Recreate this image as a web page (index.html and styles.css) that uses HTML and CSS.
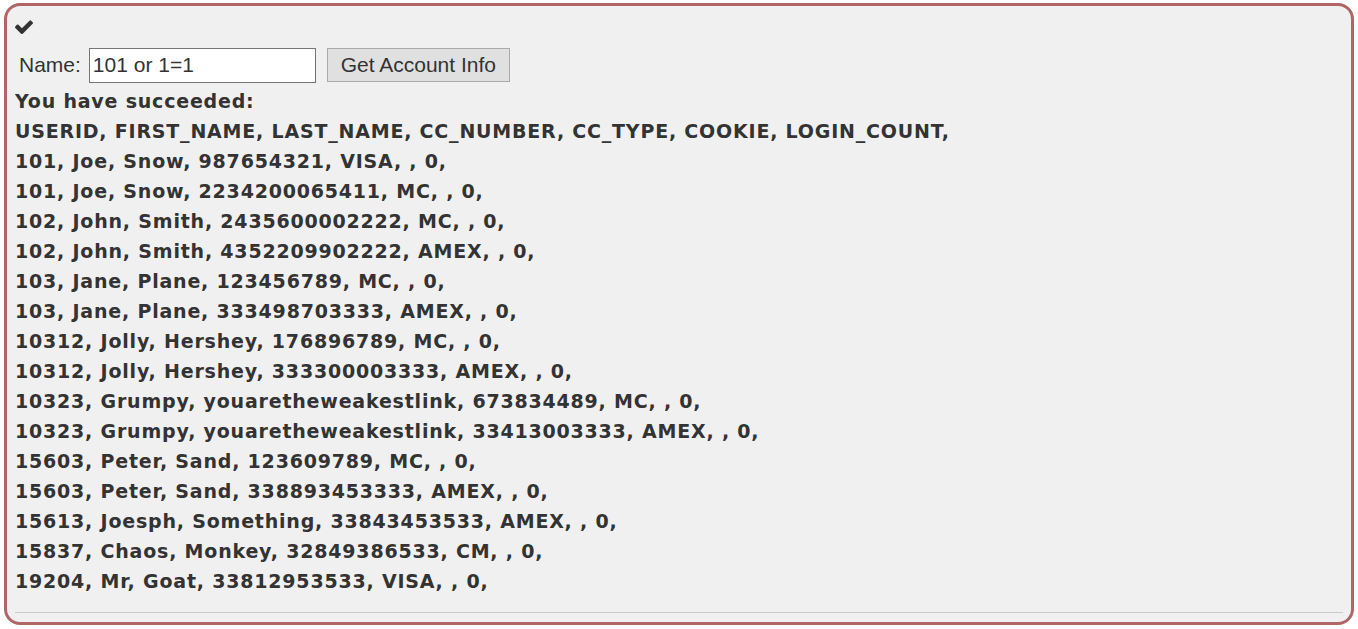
FILE: index.html
```html
<!DOCTYPE html>
<html>
<head>
<meta charset="utf-8">
<link rel="stylesheet" href="styles.css">
</head>
<body>
<div class="panel">
  <div class="check"><svg viewBox="120 320 1552 1180" width="18" height="14"><path fill="#333" d="M1671 566q0 40-28 68l-724 724-136 136q-28 28-68 28t-68-28l-136-136-362-362q-28-28-28-68t28-68l136-136q28-28 68-28t68 28l294 295 656-657q28-28 68-28t68 28l136 136q28 28 28 68z"/></svg></div>
  <form class="form">
    <label class="label">Name:</label>
    <input class="field" type="text" value="101 or 1=1">
    <button class="btn" type="button">Get Account Info</button>
  </form>
  <div class="output">
    <p>You have succeeded:</p>
    <p>USERID, FIRST_NAME, LAST_NAME, CC_NUMBER, CC_TYPE, COOKIE, LOGIN_COUNT, </p>
    <p>101, Joe, Snow, 987654321, VISA, , 0, </p>
    <p>101, Joe, Snow, 2234200065411, MC, , 0, </p>
    <p>102, John, Smith, 2435600002222, MC, , 0, </p>
    <p>102, John, Smith, 4352209902222, AMEX, , 0, </p>
    <p>103, Jane, Plane, 123456789, MC, , 0, </p>
    <p>103, Jane, Plane, 333498703333, AMEX, , 0, </p>
    <p>10312, Jolly, Hershey, 176896789, MC, , 0, </p>
    <p>10312, Jolly, Hershey, 333300003333, AMEX, , 0, </p>
    <p>10323, Grumpy, youaretheweakestlink, 673834489, MC, , 0, </p>
    <p>10323, Grumpy, youaretheweakestlink, 33413003333, AMEX, , 0, </p>
    <p>15603, Peter, Sand, 123609789, MC, , 0, </p>
    <p>15603, Peter, Sand, 338893453333, AMEX, , 0, </p>
    <p>15613, Joesph, Something, 33843453533, AMEX, , 0, </p>
    <p>15837, Chaos, Monkey, 32849386533, CM, , 0, </p>
    <p>19204, Mr, Goat, 33812953533, VISA, , 0, </p>
  </div>
  <hr class="rule">
</div>
</body>
</html>
```
FILE: styles.css
```css
html, body {
  margin: 0;
  padding: 0;
  background: #ffffff;
}
body {
  padding: 3px 4px 4px 4px;
  font-family: "Liberation Sans", Arial, sans-serif;
  color: #333333;
}
.panel {
  border: 3px solid #b06666;
  border-radius: 16px;
  background: #f0f0f0;
  padding: 9px 8px 9px 8px;
  height: 622px;
  box-sizing: border-box;
}
.check {
  height: 24px;
  padding-top: 5px;
  box-sizing: border-box;
}
.check svg {
  display: block;
}
.form {
  display: flex;
  align-items: center;
  margin: 8px 0 0 4px;
  height: 36px;
}
.label {
  font-size: 21px;
  margin-right: 8px;
}
.field {
  width: 227px;
  height: 35px;
  box-sizing: border-box;
  border: 1px solid #767676;
  background: #ffffff;
  font-family: "Liberation Sans", Arial, sans-serif;
  font-size: 21px;
  color: #333333;
  padding: 0 3px;
  margin: 0;
}
.btn {
  margin-left: 11px;
  height: 34px;
  width: 183px;
  box-sizing: border-box;
  padding: 0;
  border: 1px solid #aaaaaa;
  background: #e0e0e0;
  font-family: "Liberation Sans", Arial, sans-serif;
  font-size: 21px;
  color: #333333;
}
.output {
  margin-top: 3px;
}
.output p {
  margin: 0;
  font-family: "DejaVu Sans", "Liberation Sans", sans-serif;
  font-size: 19px;
  font-weight: bold;
  letter-spacing: 0.8px;
  line-height: 30px;
  white-space: pre;
}
.rule {
  border: 0;
  border-top: 1px solid #cccccc;
  margin: 16px 0 0 0;
}
```
